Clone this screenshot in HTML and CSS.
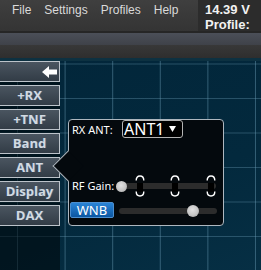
FILE: index.html
```html
<!DOCTYPE html>
<html>
<head>
<meta charset="utf-8">
<link rel="stylesheet" href="styles.css">
</head>
<body>
<div class="app">
  <header class="titlebar">
    <nav class="menu">
      <span class="menu-item">File</span>
      <span class="menu-item">Settings</span>
      <span class="menu-item">Profiles</span>
      <span class="menu-item">Help</span>
    </nav>
    <div class="status">
      <div class="status-line">14.39 V</div>
      <div class="status-line">Profile:</div>
    </div>
  </header>
  <div class="toolbar">
    <div class="toolbar-hi"></div>
    <div class="toolbar-lo"></div>
  </div>
  <main class="pan">
    <aside class="side">
      <button class="side-btn side-back"><svg class="back-icon" width="15" height="12" viewBox="0 0 15 12"><polygon points="0,6 7,0 7,3.5 15,3.5 15,8.5 7,8.5 7,12" fill="#ffffff"/></svg></button>
      <button class="side-btn">+RX</button>
      <button class="side-btn">+TNF</button>
      <button class="side-btn">Band</button>
      <button class="side-btn">ANT</button>
      <button class="side-btn">Display</button>
      <button class="side-btn">DAX</button>
    </aside>
    <div class="popup">
      <div class="row row-ant">
        <span class="lbl lbl-ant">RX ANT:</span>
        <div class="select">
          <span class="select-text">ANT1</span>
          <svg class="caret" width="7" height="6" viewBox="0 0 7 6"><polygon points="0,0 7,0 3.5,6" fill="#ffffff"/></svg>
        </div>
      </div>
      <div class="row row-rf">
        <span class="lbl">RF Gain:</span>
        <div class="slider slider-rf">
          <div class="track"></div>
          <svg class="tick" style="left:19px" width="10" height="22" viewBox="0 0 10 22"><path d="M1.2,5.5 Q1.2,1 5,1 Q8.8,1 8.8,5.5" fill="none" stroke="#fff" stroke-width="1.4"/><rect x="2" y="8" width="6" height="9" fill="#000"/><path d="M1.2,16.5 Q1.2,21 5,21 Q8.8,21 8.8,16.5" fill="none" stroke="#fff" stroke-width="1.4"/></svg>
          <svg class="tick" style="left:54px" width="10" height="22" viewBox="0 0 10 22"><path d="M1.2,5.5 Q1.2,1 5,1 Q8.8,1 8.8,5.5" fill="none" stroke="#fff" stroke-width="1.4"/><rect x="2" y="8" width="6" height="9" fill="#000"/><path d="M1.2,16.5 Q1.2,21 5,21 Q8.8,21 8.8,16.5" fill="none" stroke="#fff" stroke-width="1.4"/></svg>
          <svg class="tick" style="left:90px" width="10" height="22" viewBox="0 0 10 22"><path d="M1.2,5.5 Q1.2,1 5,1 Q8.8,1 8.8,5.5" fill="none" stroke="#fff" stroke-width="1.4"/><rect x="2" y="8" width="6" height="9" fill="#000"/><path d="M1.2,16.5 Q1.2,21 5,21 Q8.8,21 8.8,16.5" fill="none" stroke="#fff" stroke-width="1.4"/></svg>
          <div class="knob knob-sm" style="left:0px"></div>
        </div>
      </div>
      <div class="row row-wnb">
        <button class="wnb">WNB</button>
        <div class="slider slider-level">
          <div class="track"></div>
          <div class="knob" style="left:68px"></div>
        </div>
      </div>
    </div>
  </main>
</div>
</body>
</html>
```
FILE: styles.css
```css
html, body {
  margin: 0;
  padding: 0;
  background: #2e2e2e;
}
.app {
  width: 261px;
  height: 270px;
  overflow: hidden;
  display: flex;
  flex-direction: column;
  font-family: "Noto Sans", "Open Sans", sans-serif;
}
.titlebar {
  height: 31px;
  display: flex;
  background: linear-gradient(#3f3f3f, #343434);
}
.menu {
  flex: 1;
  display: flex;
  gap: 13px;
  padding: 3px 0 0 12px;
  font-family: "Liberation Sans", Arial, sans-serif;
  font-size: 12px;
  color: #dadada;
  line-height: 14px;
}
.status {
  width: 63px;
  background: #2c2c2c;
  color: #f2f2f2;
  font-family: "Liberation Sans", Arial, sans-serif;
  font-weight: bold;
  font-size: 13px;
  line-height: 14.5px;
  padding: 3px 0 0 7px;
  box-sizing: border-box;
}
.toolbar {
  height: 27px;
  display: flex;
  flex-direction: column;
  border-top: 2px solid #262626;
  box-sizing: border-box;
}
.toolbar-hi {
  height: 12px;
  background: linear-gradient(#4b4f58, #3f4249);
}
.toolbar-lo {
  flex: 1;
  background: linear-gradient(#383838, #2e2e2e);
}
.pan {
  flex: 1;
  position: relative;
  border-top: 3px solid #0d3141;
  background-color: #03283b;
  background-image:
    linear-gradient(to right, rgba(110, 160, 185, 0.45) 1px, transparent 1px),
    linear-gradient(to bottom, rgba(110, 160, 185, 0.35) 1px, transparent 1px),
    linear-gradient(160deg, #02263a 0%, #03293d 60%, #062f44 100%);
  background-size: 47.6px 34.5px, 47.6px 34.5px, 100% 100%;
  background-position: 17px 2.5px, 17px 2.5px, 0 0;
}
.side {
  width: 60px;
  height: 100%;
  background: rgba(0, 8, 12, 0.6);
  display: flex;
  flex-direction: column;
  gap: 3px;
}
.side-btn {
  margin-left: -1px;
  width: 61px;
  height: 21px;
  padding: 0;
  border: 1px solid #bcc3ca;
  background: linear-gradient(#4a5560, #323c46);
  color: #d3dae1;
  font-family: "Open Sans", "Noto Sans", sans-serif;
  font-weight: bold;
  font-size: 13px;
  line-height: 19px;
  text-align: center;
  text-shadow: 1px 0 0 rgba(90, 150, 210, 0.35);
}
.side-back {
  display: flex;
  justify-content: flex-end;
  align-items: center;
  padding-right: 2px;
}
.back-icon {
  display: block;
}
.popup {
  position: absolute;
  left: 68px;
  top: 58px;
  width: 156px;
  height: 107px;
  box-sizing: border-box;
  border: 1px solid #aeb7bf;
  border-radius: 4px;
  background: #04090d;
  padding: 0 0 0 3px;
  display: flex;
  flex-direction: column;
  color: #ffffff;
  font-size: 11px;
}
.popup::before {
  content: "";
  position: absolute;
  left: -12px;
  top: 35px;
  width: 21px;
  height: 21px;
  background: #04090d;
  border-left: 1px solid #aeb7bf;
  border-bottom: 1px solid #aeb7bf;
  transform: rotate(45deg);
}
.row {
  display: flex;
  position: relative;
}
.row-ant {
  height: 18px;
  align-items: flex-end;
  gap: 3px;
}
.lbl {
  line-height: 14px;
  padding-bottom: 1px;
}
.lbl-ant {
  width: 47px;
}
.select {
  width: 61px;
  height: 18px;
  box-sizing: border-box;
  border: 1px solid #b4b4b4;
  border-radius: 3px;
  background: #000;
  display: flex;
  align-items: center;
  justify-content: space-between;
  padding: 0 6px 0 1px;
  font-size: 16px;
}
.select-text {
  line-height: 16px;
}
.caret {
  display: block;
}
.row-rf {
  margin-top: 37px;
  height: 22px;
  align-items: center;
  gap: 2px;
}
.slider {
  position: relative;
}
.slider-rf {
  width: 100px;
  height: 22px;
}
.slider-rf .track {
  top: 8px;
}
.track {
  position: absolute;
  left: 4px;
  right: 0;
  top: 6px;
  height: 6px;
  border-radius: 3px;
  background: #2c2c2c;
}
.tick {
  position: absolute;
  top: 0;
}
.knob {
  position: absolute;
  top: 3px;
  width: 12px;
  height: 12px;
  border-radius: 50%;
  background: radial-gradient(circle at 45% 40%, #e2e2e2 0%, #c6c6c6 55%, #9a9a9a 100%);
}
.knob-sm {
  top: 6px;
  width: 11px;
  height: 11px;
}
.row-wnb {
  margin-top: 5px;
  height: 16px;
  gap: 5px;
}
.wnb {
  margin-left: -2px;
  width: 44px;
  height: 16px;
  padding: 0;
  border: 1px solid #4c8fcf;
  border-radius: 2px;
  background: linear-gradient(#2a84d6, #0b56a2);
  color: #ffffff;
  font-family: "Noto Sans", "Open Sans", sans-serif;
  font-size: 13px;
  line-height: 14px;
}
.slider-level {
  width: 98px;
  height: 16px;
}
.slider-level .track {
  left: 0;
}
```
